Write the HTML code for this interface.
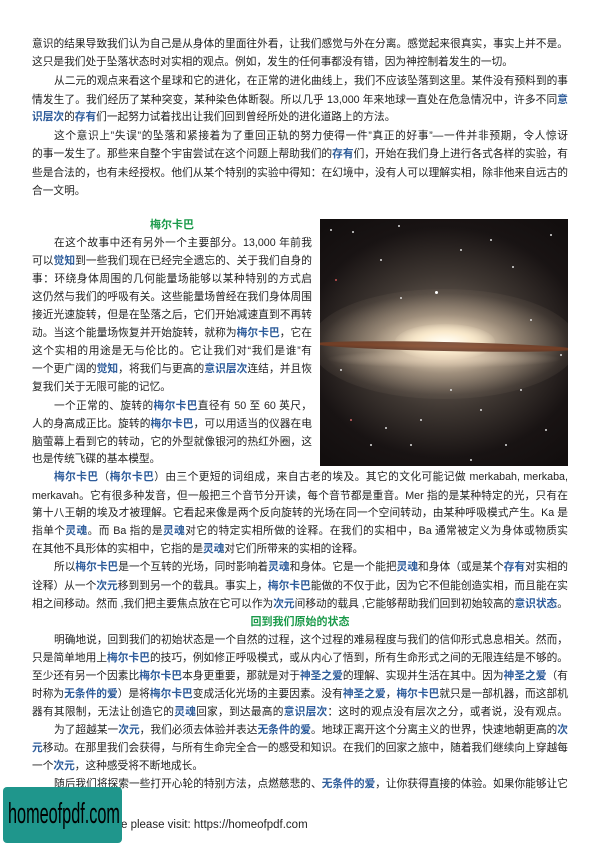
<!DOCTYPE html>
<html><head><meta charset="utf-8"><style>
body{margin:0;width:596px;height:842px;background:#fff;position:relative;overflow:hidden;font-family:"Liberation Sans","Noto Sans CJK SC",sans-serif;color:#222;}
.l{position:absolute;left:32px;width:536px;height:18px;line-height:18px;font-size:10.7px;text-align:justify;text-align-last:justify;text-justify:inter-character;overflow:hidden;white-space:normal;}
.n{text-align-last:left;}
.i{text-indent:22px;}
.c{width:280px;}
b{color:#2e5c9a;}
.h{position:absolute;left:32px;width:280px;text-align:center;color:#1a9a4a;font-weight:bold;font-size:11px;line-height:18px;}
.img{position:absolute;left:320px;top:219px;width:248px;height:247px;overflow:hidden;background:#120e0e;}
.img i{position:absolute;width:2px;height:2px;border-radius:50%;background:#ddd;}
.logo{position:absolute;left:3px;top:787px;width:119px;height:56px;background:#1f968c;border-radius:4px;overflow:hidden;}
.logo span{position:absolute;left:5px;top:10px;font-size:29px;line-height:34px;color:#000;font-family:"Liberation Sans Narrow","Liberation Sans",sans-serif;transform:scaleX(0.56);transform-origin:left;white-space:nowrap;}
.ft{position:absolute;left:121px;top:819px;font-size:11.5px;color:#222;}
</style></head><body>
<div class="l" style="top:35px">意识的结果导致我们认为自己是从身体的里面往外看，让我们感觉与外在分离。感觉起来很真实，事实上并不是。</div>
<div class="l n" style="top:53px">这只是我们处于坠落状态时对实相的观点。例如，发生的任何事都没有错，因为神控制着发生的一切。</div>
<div class="l i" style="top:72px">从二元的观点来看这个星球和它的进化，在正常的进化曲线上，我们不应该坠落到这里。某件没有预料到的事</div>
<div class="l" style="top:91px">情发生了。我们经历了某种突变，某种染色体断裂。所以几乎 13,000 年来地球一直处在危急情况中，许多不同<b>意</b></div>
<div class="l n" style="top:108px"><b>识层次</b>的<b>存有</b>们一起努力试着找出让我们回到曾经所处的进化道路上的方法。</div>
<div class="l i" style="top:127px">这个意识上”失误”的坠落和紧接着为了重回正轨的努力使得一件”真正的好事”—一件并非预期，令人惊讶</div>
<div class="l" style="top:145px">的事一发生了。那些来自整个宇宙尝试在这个问题上帮助我们的<b>存有</b>们，开始在我们身上进行各式各样的实验，有</div>
<div class="l" style="top:164px">些是合法的，也有未经授权。他们从某个特别的实验中得知：在幻境中，没有人可以理解实相，除非他来自远古的</div>
<div class="l n" style="top:182px">合一文明。</div>

<div class="h" style="top:216px">梅尔卡巴</div>
<div class="l c i" style="top:234px">在这个故事中还有另外一个主要部分。13,000 年前我们</div>
<div class="l c" style="top:252px">可以<b>觉知</b>到一些我们现在已经完全遗忘的、关于我们自身的</div>
<div class="l c" style="top:270px">事：环绕身体周围的几何能量场能够以某种特别的方式启动，</div>
<div class="l c" style="top:288px">这仍然与我们的呼吸有关。这些能量场曾经在我们身体周围</div>
<div class="l c" style="top:306px">接近光速旋转，但是在坠落之后，它们开始减速直到不再转</div>
<div class="l c" style="top:324px">动。当这个能量场恢复并开始旋转，就称为<b>梅尔卡巴</b>，它在</div>
<div class="l c" style="top:342px">这个实相的用途是无与伦比的。它让我们对“我们是谁”有</div>
<div class="l c" style="top:360px">一个更广阔的<b>觉知</b>，将我们与更高的<b>意识层次</b>连结，并且恢</div>
<div class="l c n" style="top:378px">复我们关于无限可能的记忆。</div>
<div class="l c i" style="top:397px">一个正常的、旋转的<b>梅尔卡巴</b>直径有 50 至 60 英尺，与</div>
<div class="l c" style="top:415px">人的身高成正比。旋转的<b>梅尔卡巴</b>，可以用适当的仪器在电</div>
<div class="l c" style="top:433px">脑萤幕上看到它的转动，它的外型就像银河的热红外圈，这</div>
<div class="l c n" style="top:450px">也是传统飞碟的基本模型。</div>

<div class="img">
<div style="position:absolute;inset:0;background:radial-gradient(ellipse 75% 62% at 50% 50%,rgba(150,135,120,.85),rgba(90,80,72,.6) 45%,rgba(40,32,32,.3) 75%,transparent 100%);"></div>
<div style="position:absolute;left:-10px;top:70px;width:268px;height:110px;border-radius:50%;background:radial-gradient(ellipse at 50% 50%,rgba(255,250,235,1) 0%,rgba(245,225,195,.9) 15%,rgba(200,180,155,.6) 38%,rgba(130,115,100,.2) 65%,transparent 80%);"></div>
<div style="position:absolute;left:75px;top:105px;width:100px;height:36px;border-radius:50%;background:radial-gradient(ellipse,#fffdf5 0%,rgba(255,240,210,.8) 40%,transparent 75%);"></div>
<div style="position:absolute;left:-5px;top:123px;width:258px;height:9px;border-radius:50%;background:linear-gradient(#6a3a25,#7a3e22 50%,#5a3020);opacity:.85;transform:rotate(1.2deg);"></div>
<div style="position:absolute;left:5px;top:131px;width:238px;height:18px;border-radius:50%;background:radial-gradient(ellipse,rgba(235,215,190,.55),transparent 70%);"></div>
<i style="left:10px;top:10px"></i><i style="left:32px;top:12px"></i><i style="left:78px;top:6px"></i><i style="left:170px;top:20px"></i><i style="left:192px;top:47px"></i><i style="left:115px;top:72px;width:3px;height:3px;background:#fff"></i><i style="left:15px;top:60px;background:#c55"></i><i style="left:80px;top:78px"></i><i style="left:230px;top:15px"></i><i style="left:60px;top:40px"></i><i style="left:140px;top:30px"></i><i style="left:210px;top:100px"></i><i style="left:240px;top:135px"></i><i style="left:30px;top:200px;background:#c66"></i><i style="left:100px;top:200px"></i><i style="left:65px;top:208px"></i><i style="left:160px;top:190px"></i><i style="left:200px;top:170px"></i><i style="left:90px;top:225px"></i><i style="left:130px;top:170px"></i><i style="left:50px;top:225px"></i><i style="left:185px;top:225px"></i><i style="left:225px;top:210px"></i><i style="left:20px;top:150px"></i><i style="left:150px;top:240px"></i>
</div>

<div class="l i" style="top:468px"><b>梅尔卡巴</b>（<b>梅尔卡巴</b>）由三个更短的词组成，来自古老的埃及。其它的文化可能记做 merkabah, merkaba,</div>
<div class="l" style="top:487px">merkavah。它有很多种发音，但一般把三个音节分开读，每个音节都是重音。Mer 指的是某种特定的光，只有在</div>
<div class="l" style="top:504px">第十八王朝的埃及才被理解。它看起来像是两个反向旋转的光场在同一个空间转动，由某种呼吸模式产生。Ka 是</div>
<div class="l" style="top:522px">指单个<b>灵魂</b>。而 Ba 指的是<b>灵魂</b>对它的特定实相所做的诠释。在我们的实相中，Ba 通常被定义为身体或物质实相。</div>
<div class="l n" style="top:540px">在其他不具形体的实相中，它指的是<b>灵魂</b>对它们所带来的实相的诠释。</div>
<div class="l i" style="top:558px">所以<b>梅尔卡巴</b>是一个互转的光场，同时影响着<b>灵魂</b>和身体。它是一个能把<b>灵魂</b>和身体（或是某个<b>存有</b>对实相的</div>
<div class="l" style="top:577px">诠释）从一个<b>次元</b>移到到另一个的载具。事实上，<b>梅尔卡巴</b>能做的不仅于此，因为它不但能创造实相，而且能在实</div>
<div class="l" style="top:595px">相之间移动。然而 ,我们把主要焦点放在它可以作为<b>次元</b>间移动的载具 ,它能够帮助我们回到初始较高的<b>意识状态</b>。</div>
<div class="h" style="top:613px;width:536px">回到我们原始的状态</div>
<div class="l i" style="top:631px">明确地说，回到我们的初始状态是一个自然的过程，这个过程的难易程度与我们的信仰形式息息相关。然而，</div>
<div class="l" style="top:649px">只是简单地用上<b>梅尔卡巴</b>的技巧，例如修正呼吸模式，或从内心了悟到，所有生命形式之间的无限连结是不够的。</div>
<div class="l" style="top:667px">至少还有另一个因素比<b>梅尔卡巴</b>本身更重要，那就是对于<b>神圣之爱</b>的理解、实现并生活在其中。因为<b>神圣之爱</b>（有</div>
<div class="l" style="top:685px">时称为<b>无条件的爱</b>）是将<b>梅尔卡巴</b>变成活化光场的主要因素。没有<b>神圣之爱</b>，<b>梅尔卡巴</b>就只是一部机器，而这部机</div>
<div class="l" style="top:703px">器有其限制，无法让创造它的<b>灵魂</b>回家，到达最高的<b>意识层次</b>：这时的观点没有层次之分，或者说，没有观点。</div>
<div class="l i" style="top:721px">为了超越某一<b>次元</b>，我们必须去体验并表达<b>无条件的爱</b>。地球正离开这个分离主义的世界，快速地朝更高的<b>次</b></div>
<div class="l" style="top:739px"><b>元</b>移动。在那里我们会获得，与所有生命完全合一的感受和知识。在我们的回家之旅中，随着我们继续向上穿越每</div>
<div class="l n" style="top:757px">一个<b>次元</b>，这种感受将不断地成长。</div>
<div class="l i" style="top:775px">随后我们将探索一些打开心轮的特别方法，点燃慈悲的、<b>无条件的爱</b>，让你获得直接的体验。如果你能够让它</div>

<div class="ft">e please visit: https://homeofpdf.com</div>
<div class="logo"><span>homeofpdf.com</span></div>
</body></html>
